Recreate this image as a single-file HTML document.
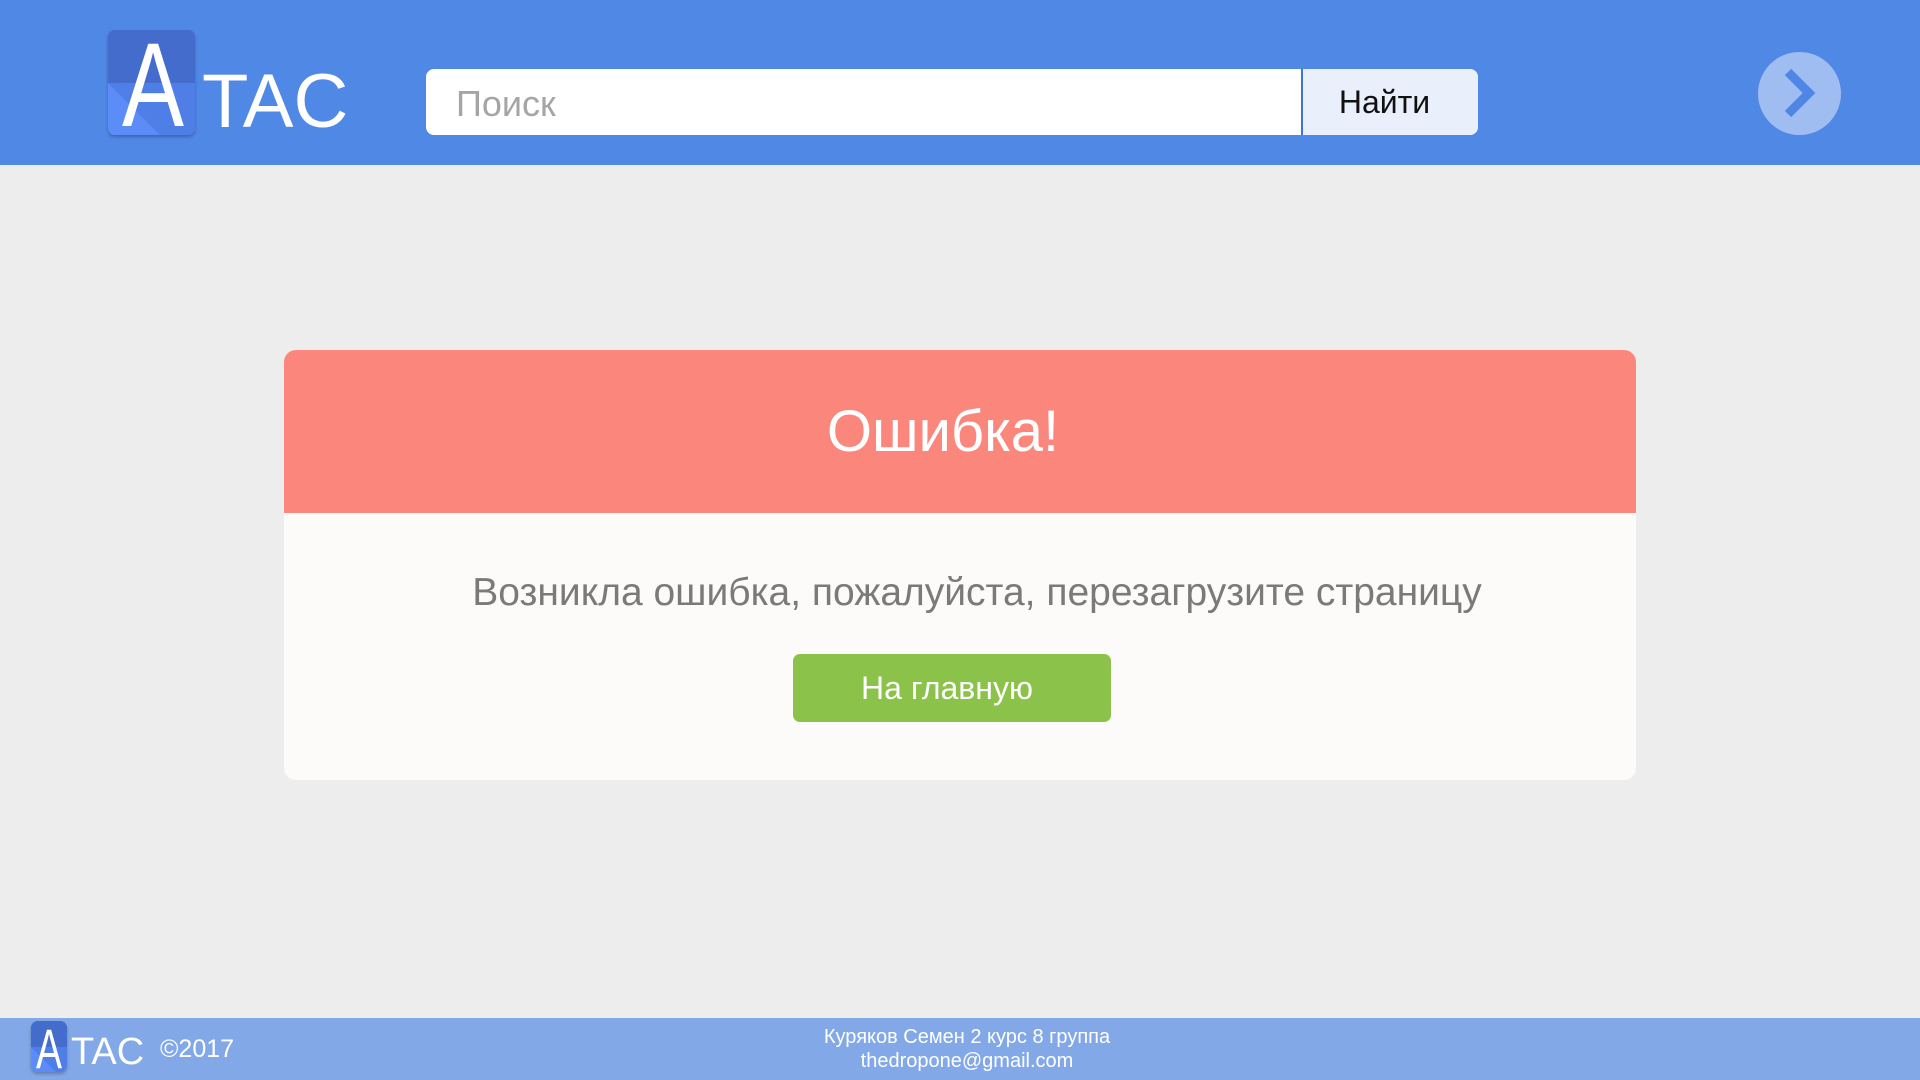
<!DOCTYPE html>
<html><head><meta charset="utf-8"><style>
*{margin:0;padding:0;box-sizing:border-box}
body{width:1920px;height:1080px;background:#ededed;font-family:"Liberation Sans",sans-serif;position:relative;overflow:hidden}
.hdr{position:absolute;left:0;top:0;width:1920px;height:165px;background:#5088e6}
.logo{position:absolute;border-radius:7px;overflow:hidden;box-shadow:0 2px 3px rgba(0,0,0,.25)}
.abs{position:absolute}
</style></head><body>
<div class="hdr">
 <div class="logo" style="left:108px;top:30px;width:87px;height:105px">
  <svg width="87" height="105" viewBox="0 0 87 105"><rect width="87" height="105" fill="#4f7fe6"/><rect width="87" height="53" fill="#436ccc"/><polygon points="0,53 52,105 0,105" fill="#5b8cf7"/>
  <text x="14" y="96" font-family="Liberation Sans" font-size="120" fill="#fff" textLength="62" lengthAdjust="spacingAndGlyphs">A</text></svg>
 </div>
 <div class="abs" style="left:202px;top:64px;font-size:76px;color:#fff;line-height:1">TAC</div>
 <div class="abs" style="left:426px;top:69px;width:1052px;height:66px;background:#fff;border-radius:8px;overflow:hidden">
  <div class="abs" style="left:30px;top:14px;font-size:36px;color:#a5a5a5">Поиск</div>
  <div class="abs" style="left:875px;top:0;width:177px;height:66px;background:#e9effb;border-left:2px solid #3f73d8;font-size:32px;color:#111;text-align:center;line-height:66px;padding-right:12px">Найти</div>
 </div>
 <div class="abs" style="left:1758px;top:52px;width:83px;height:83px;border-radius:50%;background:#a0bdf2">
  <svg width="83" height="83"><polyline points="30,20 51,41 30,62" fill="none" stroke="#4f86e6" stroke-width="9"/></svg>
 </div>
</div>
<div class="abs" style="left:284px;top:350px;width:1352px;height:430px;background:#fcfbfa;border-radius:12px;overflow:hidden">
 <div style="height:163px;background:#fb867c;color:#fff;font-size:58px;text-align:center;line-height:163px;padding-right:34px">Ошибка!</div>
 <div style="text-align:center;font-size:39px;color:#7a7a7a;margin-top:58px;padding-left:34px">Возникла ошибка, пожалуйста, перезагрузите страницу</div>
 <div class="abs" style="left:509px;top:304px;width:318px;height:68px;background:#8bc34a;border-radius:7px;color:#fff;font-size:32px;text-align:center;line-height:68px;padding-right:10px">На главную</div>
</div>
<div class="abs" style="left:0;top:1018px;width:1920px;height:62px;background:#82a8e8">
 <div class="logo" style="left:31px;top:3px;width:36px;height:51px">
  <svg width="36" height="51" viewBox="0 0 36 51"><rect width="36" height="51" fill="#4f7fe6"/><rect width="36" height="26" fill="#436ccc"/><polygon points="0,26 25,51 0,51" fill="#5b8cf7"/>
  <text x="5" y="47" font-family="Liberation Sans" font-size="56" fill="#fff" textLength="26" lengthAdjust="spacingAndGlyphs">A</text></svg>
 </div>
 <div class="abs" style="left:71px;top:15px;font-size:38px;color:#fff;line-height:1">TAC</div>
 <div class="abs" style="left:160px;top:19px;font-size:25px;color:#fff;line-height:1">©2017</div>
 <div class="abs" style="left:767px;top:7px;width:400px;text-align:center;font-size:20px;color:#fff;line-height:24px">Куряков Семен 2 курс 8 группа<br>thedropone@gmail.com</div>
</div>
</body></html>
